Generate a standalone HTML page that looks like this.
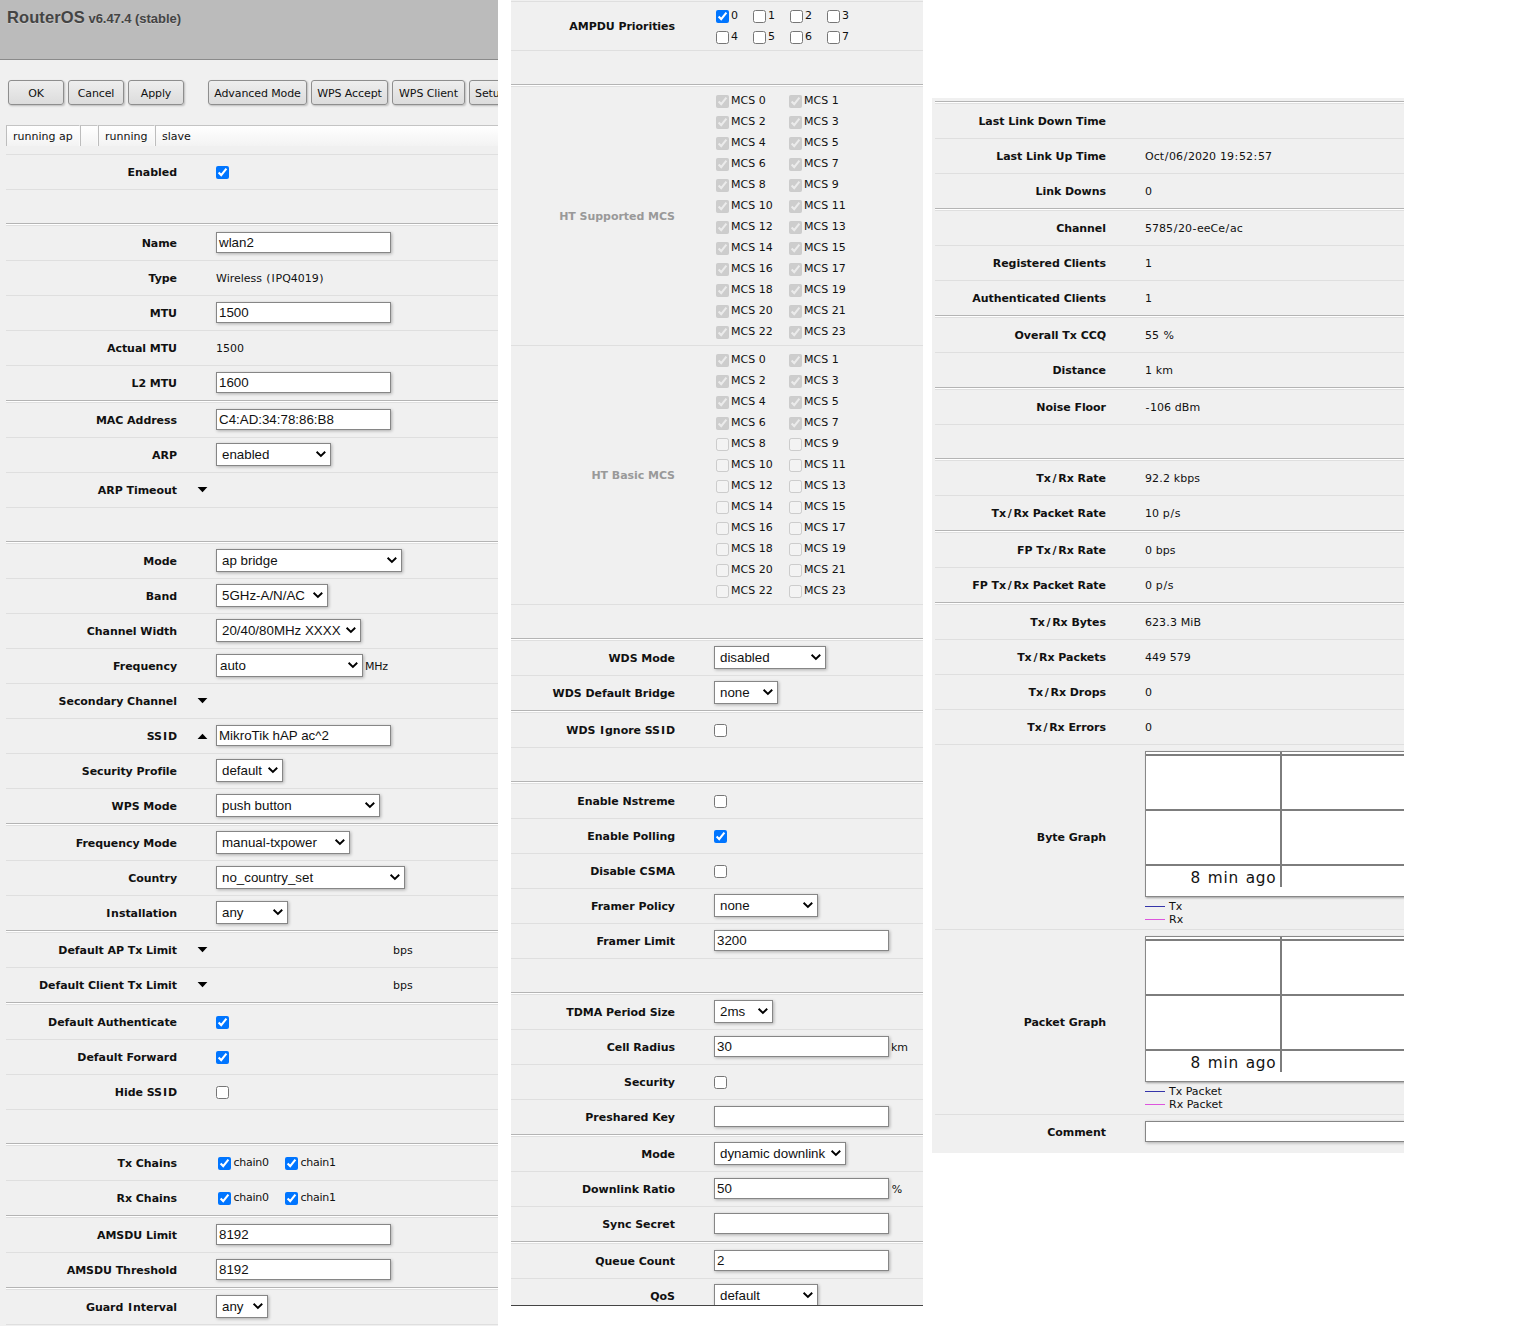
<!DOCTYPE html>
<html lang="en"><head><meta charset="utf-8"><title>RouterOS</title>
<style>
*{box-sizing:border-box}
html,body{margin:0;padding:0}
body{width:1536px;height:1326px;overflow:hidden;background:#fff;position:relative;font-family:"DejaVu Sans","Liberation Sans",sans-serif;font-size:11px;color:#111}
.p{position:absolute;overflow:hidden;background:#f0f0f0}
.r{position:absolute;right:0;border-top:1px solid #dfdfdf;display:flex;align-items:center}
.dk{position:absolute;right:0;height:2px;background:#fff;border-top:1px solid #b4b4b4}
.l{flex:none;text-align:right;font-weight:bold;white-space:nowrap;letter-spacing:-0.05px}
.l.g{color:#999}
.v{flex:none;margin-left:39px;white-space:nowrap;display:flex;align-items:center}
.t{word-spacing:.37px}
.ys{padding:0 .65px}.yp{padding:0 .35px}.yh{padding:0 .5px}.yI{padding:0 .7px}.yd{padding:0 .25px}.xI{padding:0 .95px}.xs{padding:0 1.75px}
.i{display:block;margin-bottom:1px;width:175px;height:21px;border:1px solid #868686;background:#fff;box-shadow:1px 1px 3px rgba(0,0,0,.28);font:13.333px "Liberation Sans",sans-serif;line-height:17px;padding:1px 2px;color:#111;white-space:nowrap;overflow:hidden}
.s{display:block;margin-bottom:1px;position:relative;height:23px;border:1px solid #868686;background:#fff;box-shadow:1px 1px 3px rgba(0,0,0,.28);font:13.333px "Liberation Sans",sans-serif;line-height:19px;padding:1px 0 0 5px;color:#111;white-space:nowrap;overflow:hidden}
.s svg{position:absolute;right:4px;top:7px}
.s.c{padding-left:3px}
.u{margin-left:2px;letter-spacing:-0.2px}
input[type=checkbox]{margin:0;width:13px;height:13px;flex:none}
.btn{position:absolute;top:80px;height:25px;border:1px solid #8e8e8e;border-radius:3px;background:linear-gradient(#eeeeee,#dcdcdc);box-shadow:1px 1px 2px rgba(0,0,0,.22);text-align:center;line-height:23px;padding-top:1px;white-space:nowrap;color:#111;letter-spacing:-0.1px}
.st{position:absolute;top:125px;height:21px;border-top:1px solid #c4c4c4;border-right:1px solid #fafafa;border-left:1px solid #bdbdbd;background:linear-gradient(#fff,#f3f3f3);line-height:22px;padding-left:6px;white-space:nowrap;overflow:hidden}
.cb{display:inline-flex;align-items:flex-start}
.cb span{margin-left:2.5px;letter-spacing:-0.25px;position:relative;top:-1px}
.mc{position:absolute;display:flex;align-items:center;height:13px}
.mc span{margin-left:2px;position:relative;top:-1px}
.gr{position:absolute;background:#fff;border:1px solid #888;box-shadow:1px 1px 2px rgba(0,0,0,.35)}
.gl{position:absolute;background:#7d7d7d}
.lg{position:absolute;white-space:nowrap;height:13px;line-height:13px}
.lg i{position:absolute;left:0;top:6px;width:20px;height:1px}
.lg span{position:absolute;left:24px;top:0}
</style></head>
<body>
<div class="p" style="left:0px;top:0px;width:498px;height:1326px"><div style="position:absolute;left:0;top:0;width:498px;height:60px;background:#bbb;border-bottom:1px solid #8a8a8a"></div><div style="position:absolute;left:7px;top:7px;font-family:'Liberation Sans',sans-serif;font-weight:bold;font-size:16.5px;letter-spacing:0.1px;line-height:20px;color:#444;white-space:nowrap;text-shadow:0 1px 0 rgba(255,255,255,.25)">RouterOS <span style="font-size:13px;letter-spacing:-0.05px;margin-left:-1px">v6.47.4 (stable)</span></div><div class="btn" style="left:8px;width:56px">OK</div><div class="btn" style="left:68px;width:56px">Cancel</div><div class="btn" style="left:128px;width:56px">Apply</div><div class="btn" style="left:208px;width:99px">Advanced Mode</div><div class="btn" style="left:311px;width:77px">WPS Accept</div><div class="btn" style="left:392px;width:73px">WPS Client</div><div class="btn" style="left:469px;width:60px;text-align:left;padding-left:5px">Setup</div><div class="st" style="left:6px;width:74px">running ap</div><div class="st" style="left:80px;width:18px"></div><div class="st" style="left:98px;width:57px">running</div><div class="st" style="left:155px;width:400px">slave</div><div class="r" style="left:6px;top:154px;height:35px"><div class="l" style="width:171px">Enabled</div><div class="v"><input type="checkbox" checked></div></div><div class="r" style="left:6px;top:189px;height:34px"><div class="l" style="width:171px"></div><div class="v"></div></div><div class="dk" style="left:6px;top:223px"></div><div class="r" style="left:6px;top:225px;height:35px"><div class="l" style="width:171px">Name</div><div class="v"><span class="i" style="width:175px">wlan2</span></div></div><div class="r" style="left:6px;top:260px;height:35px"><div class="l" style="width:171px">Type</div><div class="v"><span class="t">Wireless <span class="yp">(</span><span class="yI">I</span>PQ4019<span class="yp">)</span></span></div></div><div class="r" style="left:6px;top:295px;height:35px"><div class="l" style="width:171px">MTU</div><div class="v"><span class="i" style="width:175px">1500</span></div></div><div class="r" style="left:6px;top:330px;height:35px"><div class="l" style="width:171px">Actual MTU</div><div class="v"><span class="t">1500</span></div></div><div class="r" style="left:6px;top:365px;height:35px"><div class="l" style="width:171px">L2 MTU</div><div class="v"><span class="i" style="width:175px">1600</span></div></div><div class="dk" style="left:6px;top:400px"></div><div class="r" style="left:6px;top:402px;height:35px"><div class="l" style="width:171px">MAC Address</div><div class="v"><span class="i" style="width:175px">C4:AD:34:78:86:B8</span></div></div><div class="r" style="left:6px;top:437px;height:35px"><div class="l" style="width:171px">ARP</div><div class="v"><span class="s" style="width:115px">enabled<svg width="11" height="8" viewBox="0 0 11 8"><path d="M1.6 0.7 L5.9 4.9 L10.2 0.7" fill="none" stroke="#000" stroke-width="1.9"/></svg></span></div></div><div class="r" style="left:6px;top:472px;height:35px"><div class="l" style="width:171px">ARP Timeout</div><div class="v"></div></div><div class="r" style="left:6px;top:507px;height:34px"><div class="l" style="width:171px"></div><div class="v"></div></div><div class="dk" style="left:6px;top:541px"></div><div class="r" style="left:6px;top:543px;height:35px"><div class="l" style="width:171px">Mode</div><div class="v"><span class="s" style="width:186px">ap bridge<svg width="11" height="8" viewBox="0 0 11 8"><path d="M1.6 0.7 L5.9 4.9 L10.2 0.7" fill="none" stroke="#000" stroke-width="1.9"/></svg></span></div></div><div class="r" style="left:6px;top:578px;height:35px"><div class="l" style="width:171px">Band</div><div class="v"><span class="s" style="width:112px">5GHz-A/N/AC<svg width="11" height="8" viewBox="0 0 11 8"><path d="M1.6 0.7 L5.9 4.9 L10.2 0.7" fill="none" stroke="#000" stroke-width="1.9"/></svg></span></div></div><div class="r" style="left:6px;top:613px;height:35px"><div class="l" style="width:171px">Channel Width</div><div class="v"><span class="s" style="width:145px">20/40/80MHz XXXX<svg width="11" height="8" viewBox="0 0 11 8"><path d="M1.6 0.7 L5.9 4.9 L10.2 0.7" fill="none" stroke="#000" stroke-width="1.9"/></svg></span></div></div><div class="r" style="left:6px;top:648px;height:35px"><div class="l" style="width:171px">Frequency</div><div class="v"><span class="s c" style="width:147px">auto<svg width="11" height="8" viewBox="0 0 11 8"><path d="M1.6 0.7 L5.9 4.9 L10.2 0.7" fill="none" stroke="#000" stroke-width="1.9"/></svg></span><span class="u">MHz</span></div></div><div class="r" style="left:6px;top:683px;height:35px"><div class="l" style="width:171px">Secondary Channel</div><div class="v"></div></div><div class="r" style="left:6px;top:718px;height:35px"><div class="l" style="width:171px">SS<span class="xI">I</span>D</div><div class="v"><span class="i" style="width:175px">MikroTik hAP ac^2</span></div></div><div class="r" style="left:6px;top:753px;height:35px"><div class="l" style="width:171px">Security Profile</div><div class="v"><span class="s" style="width:67px">default<svg width="11" height="8" viewBox="0 0 11 8"><path d="M1.6 0.7 L5.9 4.9 L10.2 0.7" fill="none" stroke="#000" stroke-width="1.9"/></svg></span></div></div><div class="r" style="left:6px;top:788px;height:35px"><div class="l" style="width:171px">WPS Mode</div><div class="v"><span class="s" style="width:164px">push button<svg width="11" height="8" viewBox="0 0 11 8"><path d="M1.6 0.7 L5.9 4.9 L10.2 0.7" fill="none" stroke="#000" stroke-width="1.9"/></svg></span></div></div><div class="dk" style="left:6px;top:823px"></div><div class="r" style="left:6px;top:825px;height:35px"><div class="l" style="width:171px">Frequency Mode</div><div class="v"><span class="s" style="width:134px">manual-txpower<svg width="11" height="8" viewBox="0 0 11 8"><path d="M1.6 0.7 L5.9 4.9 L10.2 0.7" fill="none" stroke="#000" stroke-width="1.9"/></svg></span></div></div><div class="r" style="left:6px;top:860px;height:35px"><div class="l" style="width:171px">Country</div><div class="v"><span class="s" style="width:189px">no_country_set<svg width="11" height="8" viewBox="0 0 11 8"><path d="M1.6 0.7 L5.9 4.9 L10.2 0.7" fill="none" stroke="#000" stroke-width="1.9"/></svg></span></div></div><div class="r" style="left:6px;top:895px;height:35px"><div class="l" style="width:171px"><span class="xI">I</span>nstallation</div><div class="v"><span class="s" style="width:72px">any<svg width="11" height="8" viewBox="0 0 11 8"><path d="M1.6 0.7 L5.9 4.9 L10.2 0.7" fill="none" stroke="#000" stroke-width="1.9"/></svg></span></div></div><div class="dk" style="left:6px;top:930px"></div><div class="r" style="left:6px;top:932px;height:35px"><div class="l" style="width:171px">Default AP Tx Limit</div><div class="v"><span style="margin-left:177px">bps</span></div></div><div class="r" style="left:6px;top:967px;height:35px"><div class="l" style="width:171px">Default Client Tx Limit</div><div class="v"><span style="margin-left:177px">bps</span></div></div><div class="dk" style="left:6px;top:1002px"></div><div class="r" style="left:6px;top:1004px;height:35px"><div class="l" style="width:171px">Default Authenticate</div><div class="v"><input type="checkbox" checked></div></div><div class="r" style="left:6px;top:1039px;height:35px"><div class="l" style="width:171px">Default Forward</div><div class="v"><input type="checkbox" checked></div></div><div class="r" style="left:6px;top:1074px;height:35px"><div class="l" style="width:171px">Hide SS<span class="xI">I</span>D</div><div class="v"><input type="checkbox"></div></div><div class="r" style="left:6px;top:1109px;height:34px"><div class="l" style="width:171px"></div><div class="v"></div></div><div class="dk" style="left:6px;top:1143px"></div><div class="r" style="left:6px;top:1145px;height:35px"><div class="l" style="width:171px">Tx Chains</div><div class="v"><span class="cb" style="margin-left:2px;width:67px"><input type="checkbox" checked><span>chain0</span></span><span class="cb"><input type="checkbox" checked><span>chain1</span></span></div></div><div class="r" style="left:6px;top:1180px;height:35px"><div class="l" style="width:171px">Rx Chains</div><div class="v"><span class="cb" style="margin-left:2px;width:67px"><input type="checkbox" checked><span>chain0</span></span><span class="cb"><input type="checkbox" checked><span>chain1</span></span></div></div><div class="dk" style="left:6px;top:1215px"></div><div class="r" style="left:6px;top:1217px;height:35px"><div class="l" style="width:171px">AMSDU Limit</div><div class="v"><span class="i" style="width:175px">8192</span></div></div><div class="r" style="left:6px;top:1252px;height:35px"><div class="l" style="width:171px">AMSDU Threshold</div><div class="v"><span class="i" style="width:175px">8192</span></div></div><div class="dk" style="left:6px;top:1287px"></div><div class="r" style="left:6px;top:1289px;height:35px"><div class="l" style="width:171px">Guard <span class="xI">I</span>nterval</div><div class="v"><span class="s" style="width:52px">any<svg width="11" height="8" viewBox="0 0 11 8"><path d="M1.6 0.7 L5.9 4.9 L10.2 0.7" fill="none" stroke="#000" stroke-width="1.9"/></svg></span></div></div><div class="r" style="left:6px;top:1324px;height:35px"><div class="l" style="width:171px"></div><div class="v"></div></div><div class="dk" style="left:6px;top:1359px"></div><svg style="position:absolute;left:197px;top:487px" width="11" height="6" viewBox="0 0 11 6"><polygon points="0.6,0 10.4,0 5.5,5.2" fill="#000"/></svg><svg style="position:absolute;left:197px;top:698px" width="11" height="6" viewBox="0 0 11 6"><polygon points="0.6,0 10.4,0 5.5,5.2" fill="#000"/></svg><svg style="position:absolute;left:197px;top:947px" width="11" height="6" viewBox="0 0 11 6"><polygon points="0.6,0 10.4,0 5.5,5.2" fill="#000"/></svg><svg style="position:absolute;left:197px;top:982px" width="11" height="6" viewBox="0 0 11 6"><polygon points="0.6,0 10.4,0 5.5,5.2" fill="#000"/></svg><svg style="position:absolute;left:197px;top:733px" width="11" height="6" viewBox="0 0 11 6"><polygon points="0.6,6 10.4,6 5.5,0.7" fill="#000"/></svg></div>
<div class="p" style="left:511px;top:0px;width:412px;height:1326px"><div class="r" style="left:0px;top:1px;height:49px"><div class="l" style="width:164px">AMPDU Priorities</div><div class="v"><div style="position:relative;width:200px;height:48px"><span class="mc" style="left:2px;top:8px"><input type="checkbox" checked><span>0</span></span><span class="mc" style="left:39px;top:8px"><input type="checkbox"><span>1</span></span><span class="mc" style="left:76px;top:8px"><input type="checkbox"><span>2</span></span><span class="mc" style="left:113px;top:8px"><input type="checkbox"><span>3</span></span><span class="mc" style="left:2px;top:29px"><input type="checkbox"><span>4</span></span><span class="mc" style="left:39px;top:29px"><input type="checkbox"><span>5</span></span><span class="mc" style="left:76px;top:29px"><input type="checkbox"><span>6</span></span><span class="mc" style="left:113px;top:29px"><input type="checkbox"><span>7</span></span></div></div></div><div class="r" style="left:0px;top:50px;height:34px"><div class="l" style="width:164px"></div><div class="v"></div></div><div class="dk" style="left:0px;top:84px"></div><div class="r" style="left:0px;top:86px;height:259px"><div class="l g" style="width:164px">HT Supported MCS</div><div class="v"><div style="position:relative;width:200px;height:258px"><span class="mc" style="left:2px;top:8px"><input type="checkbox" checked disabled><span>MCS 0</span></span><span class="mc" style="left:75px;top:8px"><input type="checkbox" checked disabled><span>MCS 1</span></span><span class="mc" style="left:2px;top:29px"><input type="checkbox" checked disabled><span>MCS 2</span></span><span class="mc" style="left:75px;top:29px"><input type="checkbox" checked disabled><span>MCS 3</span></span><span class="mc" style="left:2px;top:50px"><input type="checkbox" checked disabled><span>MCS 4</span></span><span class="mc" style="left:75px;top:50px"><input type="checkbox" checked disabled><span>MCS 5</span></span><span class="mc" style="left:2px;top:71px"><input type="checkbox" checked disabled><span>MCS 6</span></span><span class="mc" style="left:75px;top:71px"><input type="checkbox" checked disabled><span>MCS 7</span></span><span class="mc" style="left:2px;top:92px"><input type="checkbox" checked disabled><span>MCS 8</span></span><span class="mc" style="left:75px;top:92px"><input type="checkbox" checked disabled><span>MCS 9</span></span><span class="mc" style="left:2px;top:113px"><input type="checkbox" checked disabled><span>MCS 10</span></span><span class="mc" style="left:75px;top:113px"><input type="checkbox" checked disabled><span>MCS 11</span></span><span class="mc" style="left:2px;top:134px"><input type="checkbox" checked disabled><span>MCS 12</span></span><span class="mc" style="left:75px;top:134px"><input type="checkbox" checked disabled><span>MCS 13</span></span><span class="mc" style="left:2px;top:155px"><input type="checkbox" checked disabled><span>MCS 14</span></span><span class="mc" style="left:75px;top:155px"><input type="checkbox" checked disabled><span>MCS 15</span></span><span class="mc" style="left:2px;top:176px"><input type="checkbox" checked disabled><span>MCS 16</span></span><span class="mc" style="left:75px;top:176px"><input type="checkbox" checked disabled><span>MCS 17</span></span><span class="mc" style="left:2px;top:197px"><input type="checkbox" checked disabled><span>MCS 18</span></span><span class="mc" style="left:75px;top:197px"><input type="checkbox" checked disabled><span>MCS 19</span></span><span class="mc" style="left:2px;top:218px"><input type="checkbox" checked disabled><span>MCS 20</span></span><span class="mc" style="left:75px;top:218px"><input type="checkbox" checked disabled><span>MCS 21</span></span><span class="mc" style="left:2px;top:239px"><input type="checkbox" checked disabled><span>MCS 22</span></span><span class="mc" style="left:75px;top:239px"><input type="checkbox" checked disabled><span>MCS 23</span></span></div></div></div><div class="r" style="left:0px;top:345px;height:259px"><div class="l g" style="width:164px">HT Basic MCS</div><div class="v"><div style="position:relative;width:200px;height:258px"><span class="mc" style="left:2px;top:8px"><input type="checkbox" checked disabled><span>MCS 0</span></span><span class="mc" style="left:75px;top:8px"><input type="checkbox" checked disabled><span>MCS 1</span></span><span class="mc" style="left:2px;top:29px"><input type="checkbox" checked disabled><span>MCS 2</span></span><span class="mc" style="left:75px;top:29px"><input type="checkbox" checked disabled><span>MCS 3</span></span><span class="mc" style="left:2px;top:50px"><input type="checkbox" checked disabled><span>MCS 4</span></span><span class="mc" style="left:75px;top:50px"><input type="checkbox" checked disabled><span>MCS 5</span></span><span class="mc" style="left:2px;top:71px"><input type="checkbox" checked disabled><span>MCS 6</span></span><span class="mc" style="left:75px;top:71px"><input type="checkbox" checked disabled><span>MCS 7</span></span><span class="mc" style="left:2px;top:92px"><input type="checkbox" disabled><span>MCS 8</span></span><span class="mc" style="left:75px;top:92px"><input type="checkbox" disabled><span>MCS 9</span></span><span class="mc" style="left:2px;top:113px"><input type="checkbox" disabled><span>MCS 10</span></span><span class="mc" style="left:75px;top:113px"><input type="checkbox" disabled><span>MCS 11</span></span><span class="mc" style="left:2px;top:134px"><input type="checkbox" disabled><span>MCS 12</span></span><span class="mc" style="left:75px;top:134px"><input type="checkbox" disabled><span>MCS 13</span></span><span class="mc" style="left:2px;top:155px"><input type="checkbox" disabled><span>MCS 14</span></span><span class="mc" style="left:75px;top:155px"><input type="checkbox" disabled><span>MCS 15</span></span><span class="mc" style="left:2px;top:176px"><input type="checkbox" disabled><span>MCS 16</span></span><span class="mc" style="left:75px;top:176px"><input type="checkbox" disabled><span>MCS 17</span></span><span class="mc" style="left:2px;top:197px"><input type="checkbox" disabled><span>MCS 18</span></span><span class="mc" style="left:75px;top:197px"><input type="checkbox" disabled><span>MCS 19</span></span><span class="mc" style="left:2px;top:218px"><input type="checkbox" disabled><span>MCS 20</span></span><span class="mc" style="left:75px;top:218px"><input type="checkbox" disabled><span>MCS 21</span></span><span class="mc" style="left:2px;top:239px"><input type="checkbox" disabled><span>MCS 22</span></span><span class="mc" style="left:75px;top:239px"><input type="checkbox" disabled><span>MCS 23</span></span></div></div></div><div class="r" style="left:0px;top:604px;height:34px"><div class="l" style="width:164px"></div><div class="v"></div></div><div class="dk" style="left:0px;top:638px"></div><div class="r" style="left:0px;top:640px;height:35px"><div class="l" style="width:164px">WDS Mode</div><div class="v"><span class="s" style="width:112px">disabled<svg width="11" height="8" viewBox="0 0 11 8"><path d="M1.6 0.7 L5.9 4.9 L10.2 0.7" fill="none" stroke="#000" stroke-width="1.9"/></svg></span></div></div><div class="r" style="left:0px;top:675px;height:35px"><div class="l" style="width:164px">WDS Default Bridge</div><div class="v"><span class="s" style="width:64px">none<svg width="11" height="8" viewBox="0 0 11 8"><path d="M1.6 0.7 L5.9 4.9 L10.2 0.7" fill="none" stroke="#000" stroke-width="1.9"/></svg></span></div></div><div class="dk" style="left:0px;top:710px"></div><div class="r" style="left:0px;top:712px;height:35px"><div class="l" style="width:164px">WDS <span class="xI">I</span>gnore SS<span class="xI">I</span>D</div><div class="v"><input type="checkbox"></div></div><div class="r" style="left:0px;top:747px;height:34px"><div class="l" style="width:164px"></div><div class="v"></div></div><div class="dk" style="left:0px;top:781px"></div><div class="r" style="left:0px;top:783px;height:35px"><div class="l" style="width:164px">Enable Nstreme</div><div class="v"><input type="checkbox"></div></div><div class="r" style="left:0px;top:818px;height:35px"><div class="l" style="width:164px">Enable Polling</div><div class="v"><input type="checkbox" checked></div></div><div class="r" style="left:0px;top:853px;height:35px"><div class="l" style="width:164px">Disable CSMA</div><div class="v"><input type="checkbox"></div></div><div class="r" style="left:0px;top:888px;height:35px"><div class="l" style="width:164px">Framer Policy</div><div class="v"><span class="s" style="width:104px">none<svg width="11" height="8" viewBox="0 0 11 8"><path d="M1.6 0.7 L5.9 4.9 L10.2 0.7" fill="none" stroke="#000" stroke-width="1.9"/></svg></span></div></div><div class="r" style="left:0px;top:923px;height:35px"><div class="l" style="width:164px">Framer Limit</div><div class="v"><span class="i" style="width:175px">3200</span></div></div><div class="r" style="left:0px;top:958px;height:34px"><div class="l" style="width:164px"></div><div class="v"></div></div><div class="dk" style="left:0px;top:992px"></div><div class="r" style="left:0px;top:994px;height:35px"><div class="l" style="width:164px">TDMA Period Size</div><div class="v"><span class="s" style="width:59px">2ms<svg width="11" height="8" viewBox="0 0 11 8"><path d="M1.6 0.7 L5.9 4.9 L10.2 0.7" fill="none" stroke="#000" stroke-width="1.9"/></svg></span></div></div><div class="r" style="left:0px;top:1029px;height:35px"><div class="l" style="width:164px">Cell Radius</div><div class="v"><span class="i" style="width:175px">30</span><span class="u">km</span></div></div><div class="r" style="left:0px;top:1064px;height:35px"><div class="l" style="width:164px">Security</div><div class="v"><input type="checkbox"></div></div><div class="r" style="left:0px;top:1099px;height:35px"><div class="l" style="width:164px">Preshared Key</div><div class="v"><span class="i" style="width:175px"></span></div></div><div class="dk" style="left:0px;top:1134px"></div><div class="r" style="left:0px;top:1136px;height:35px"><div class="l" style="width:164px">Mode</div><div class="v"><span class="s" style="width:132px">dynamic downlink<svg width="11" height="8" viewBox="0 0 11 8"><path d="M1.6 0.7 L5.9 4.9 L10.2 0.7" fill="none" stroke="#000" stroke-width="1.9"/></svg></span></div></div><div class="r" style="left:0px;top:1171px;height:35px"><div class="l" style="width:164px">Downlink Ratio</div><div class="v"><span class="i" style="width:175px">50</span><span class="u"><span class="yI">%</span></span></div></div><div class="r" style="left:0px;top:1206px;height:35px"><div class="l" style="width:164px">Sync Secret</div><div class="v"><span class="i" style="width:175px"></span></div></div><div class="dk" style="left:0px;top:1241px"></div><div class="r" style="left:0px;top:1243px;height:35px"><div class="l" style="width:164px">Queue Count</div><div class="v"><span class="i" style="width:175px">2</span></div></div><div class="r" style="left:0px;top:1278px;height:35px"><div class="l" style="width:164px">QoS</div><div class="v"><span class="s" style="width:104px">default<svg width="11" height="8" viewBox="0 0 11 8"><path d="M1.6 0.7 L5.9 4.9 L10.2 0.7" fill="none" stroke="#000" stroke-width="1.9"/></svg></span></div></div><div class="dk" style="left:0px;top:1313px"></div><div style="position:absolute;left:0;right:0;top:1305px;height:1px;background:#444"></div><div style="position:absolute;left:0;right:0;top:1306px;height:30px;background:#fff"></div></div>
<div class="p" style="left:932px;top:98px;width:472px;height:1055px"><div class="dk" style="left:3px;top:3px"></div><div class="r" style="left:3px;top:5px;height:35px"><div class="l" style="width:171px">Last Link Down Time</div><div class="v"></div></div><div class="r" style="left:3px;top:40px;height:35px"><div class="l" style="width:171px">Last Link Up Time</div><div class="v"><span class="t">Oct<span class="ys">/</span>06<span class="ys">/</span>2020 19<span class="ys">:</span>52<span class="ys">:</span>57</span></div></div><div class="r" style="left:3px;top:75px;height:35px"><div class="l" style="width:171px">Link Downs</div><div class="v"><span class="t">0</span></div></div><div class="dk" style="left:3px;top:110px"></div><div class="r" style="left:3px;top:112px;height:35px"><div class="l" style="width:171px">Channel</div><div class="v"><span class="t">5785<span class="ys">/</span>20<span class="yh">-</span>eeCe<span class="ys">/</span>ac</span></div></div><div class="r" style="left:3px;top:147px;height:35px"><div class="l" style="width:171px">Registered Clients</div><div class="v"><span class="t">1</span></div></div><div class="r" style="left:3px;top:182px;height:35px"><div class="l" style="width:171px">Authenticated Clients</div><div class="v"><span class="t">1</span></div></div><div class="dk" style="left:3px;top:217px"></div><div class="r" style="left:3px;top:219px;height:35px"><div class="l" style="width:171px">Overall Tx CCQ</div><div class="v"><span class="t">55 <span class="yI">%</span></span></div></div><div class="r" style="left:3px;top:254px;height:35px"><div class="l" style="width:171px">Distance</div><div class="v"><span class="t">1 km</span></div></div><div class="dk" style="left:3px;top:289px"></div><div class="r" style="left:3px;top:291px;height:35px"><div class="l" style="width:171px">Noise Floor</div><div class="v"><span class="t"><span class="yh">-</span>106 dBm</span></div></div><div class="r" style="left:3px;top:326px;height:34px"><div class="l" style="width:171px"></div><div class="v"></div></div><div class="dk" style="left:3px;top:360px"></div><div class="r" style="left:3px;top:362px;height:35px"><div class="l" style="width:171px">Tx<span class="xs">/</span>Rx Rate</div><div class="v"><span class="t">92<span class="yd">.</span>2 kbps</span></div></div><div class="r" style="left:3px;top:397px;height:35px"><div class="l" style="width:171px">Tx<span class="xs">/</span>Rx Packet Rate</div><div class="v"><span class="t">10 p<span class="ys">/</span>s</span></div></div><div class="dk" style="left:3px;top:432px"></div><div class="r" style="left:3px;top:434px;height:35px"><div class="l" style="width:171px">FP Tx<span class="xs">/</span>Rx Rate</div><div class="v"><span class="t">0 bps</span></div></div><div class="r" style="left:3px;top:469px;height:35px"><div class="l" style="width:171px">FP Tx<span class="xs">/</span>Rx Packet Rate</div><div class="v"><span class="t">0 p<span class="ys">/</span>s</span></div></div><div class="dk" style="left:3px;top:504px"></div><div class="r" style="left:3px;top:506px;height:35px"><div class="l" style="width:171px">Tx<span class="xs">/</span>Rx Bytes</div><div class="v"><span class="t">623<span class="yd">.</span>3 MiB</span></div></div><div class="r" style="left:3px;top:541px;height:35px"><div class="l" style="width:171px">Tx<span class="xs">/</span>Rx Packets</div><div class="v"><span class="t">449 579</span></div></div><div class="r" style="left:3px;top:576px;height:35px"><div class="l" style="width:171px">Tx<span class="xs">/</span>Rx Drops</div><div class="v"><span class="t">0</span></div></div><div class="r" style="left:3px;top:611px;height:35px"><div class="l" style="width:171px">Tx<span class="xs">/</span>Rx Errors</div><div class="v"><span class="t">0</span></div></div><div class="r" style="left:3px;top:646px;height:185px"><div class="l" style="width:171px">Byte Graph</div><div class="v"><div style="position:relative;width:300px;height:184px"><div class="gr" style="left:0;top:6px;width:300px;height:146px"><i class="gl" style="left:0;top:2px;width:300px;height:2px"></i><i class="gl" style="left:0;top:57px;width:300px;height:2px"></i><i class="gl" style="left:0;top:112px;width:300px;height:2px"></i><i class="gl" style="left:134px;top:0;width:2px;height:135px"></i><span style="position:absolute;left:0;width:130.5px;top:114px;text-align:right;font-size:15.3px;letter-spacing:.8px;word-spacing:1px;line-height:24px;white-space:nowrap">8 min ago</span></div><span class="lg" style="left:0;top:155px"><i style="background:#3535aa"></i><span>Tx</span></span><span class="lg" style="left:0;top:168px"><i style="background:#dd55dd"></i><span>Rx</span></span></div></div></div><div class="r" style="left:3px;top:831px;height:185px"><div class="l" style="width:171px">Packet Graph</div><div class="v"><div style="position:relative;width:300px;height:184px"><div class="gr" style="left:0;top:6px;width:300px;height:146px"><i class="gl" style="left:0;top:2px;width:300px;height:2px"></i><i class="gl" style="left:0;top:57px;width:300px;height:2px"></i><i class="gl" style="left:0;top:112px;width:300px;height:2px"></i><i class="gl" style="left:134px;top:0;width:2px;height:135px"></i><span style="position:absolute;left:0;width:130.5px;top:114px;text-align:right;font-size:15.3px;letter-spacing:.8px;word-spacing:1px;line-height:24px;white-space:nowrap">8 min ago</span></div><span class="lg" style="left:0;top:155px"><i style="background:#3535aa"></i><span>Tx Packet</span></span><span class="lg" style="left:0;top:168px"><i style="background:#dd55dd"></i><span>Rx Packet</span></span></div></div></div><div class="r" style="left:3px;top:1016px;height:35px"><div class="l" style="width:171px">Comment</div><div class="v"><span class="i" style="width:300px"></span></div></div></div>
</body></html>
